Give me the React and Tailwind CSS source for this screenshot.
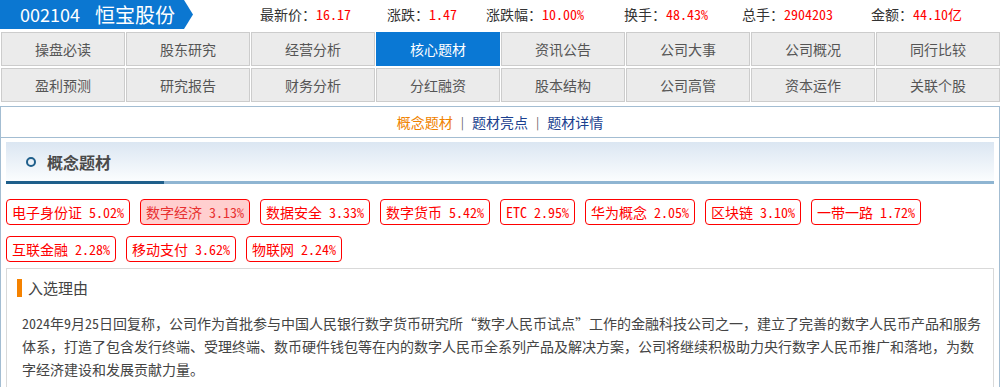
import React from "react";

const FONT = { fontFamily: '"Noto Sans CJK SC", "Noto Sans", sans-serif' };

const navRows = [
  ["操盘必读", "股东研究", "经营分析", "核心题材", "资讯公告", "公司大事", "公司概况", "同行比较"],
  ["盈利预测", "研究报告", "财务分析", "分红融资", "股本结构", "公司高管", "资本运作", "关联个股"],
];

const stats = [
  ["最新价：", "16.17", "w-[127px]"],
  ["涨跌：", "1.47", "w-[99px]"],
  ["涨跌幅：", "10.00%", "w-[138px]"],
  ["换手：", "48.43%", "w-[118px]"],
  ["总手：", "2904203", "w-[129px]"],
  ["金额：", "44.10亿", "w-[110px]"],
];

const tags = [
  ["电子身份证", "5.02%", false],
  ["数字经济", "3.13%", true],
  ["数据安全", "3.33%", false],
  ["数字货币", "5.42%", false],
  ["ETC", "2.95%", false],
  ["华为概念", "2.05%", false],
  ["区块链", "3.10%", false],
  ["一带一路", "1.72%", false],
  ["互联金融", "2.28%", false],
  ["移动支付", "3.62%", false],
  ["物联网", "2.24%", false],
];

function N({ children }) {
  return <span className="[font-feature-settings:'hwid']">{children}</span>;
}

export default function App() {
  return (
    <div className="w-[1001px] h-[387px] overflow-hidden bg-white" style={FONT}>
      {/* top header */}
      <div className="flex items-center h-[29px]">
        <div className="w-[193px] h-[29px] bg-[#0b77d1] [clip-path:polygon(0_0,184px_0,193px_50%,184px_100%,0_100%)] flex items-center pl-[20px] text-white">
          <span className="text-[18px] leading-[29px] w-[75px]">002104</span>
          <span className="text-[20px] leading-[29px]">恒宝股份</span>
        </div>
        <div className="flex items-center ml-[67px] text-[14px] leading-[29px]">
          {stats.map(([l, v, w]) => (
            <div key={l} className={`${w} whitespace-nowrap`}>
              <span className="text-[#333]">{l}</span>
              <span className="text-[#ff0000] [font-feature-settings:'hwid']">{v}</span>
            </div>
          ))}
        </div>
      </div>

      {/* nav grid */}
      <div className="mt-[3px] ml-px w-[999px] grid grid-cols-8 gap-x-px gap-y-[2px]">
        {navRows.flat().map((t) => {
          const active = t === "核心题材";
          return (
            <div
              key={t}
              className={
                active
                  ? "h-[34px] border border-[#0a78d4] bg-[#0a78d4] text-white flex items-center justify-center text-[14px]"
                  : "h-[34px] border border-[#cccccc] bg-[#ebebeb] text-[#555] flex items-center justify-center text-[14px]"
              }
            >
              {t}
            </div>
          );
        })}
      </div>

      {/* main panel */}
      <div className="mt-[4px] w-[1000px] border border-[#a3bdd2] h-[300px]">
        <div className="h-[31px] border-b border-[#a3bdd2] flex items-center justify-center text-[14px]">
          <span className="text-[#f08200]">概念题材</span>
          <span className="mx-[8px] text-[#666] text-[12px]">|</span>
          <span className="text-[#1a3f8f]">题材亮点</span>
          <span className="mx-[8px] text-[#666] text-[12px]">|</span>
          <span className="text-[#1a3f8f]">题材详情</span>
        </div>

        {/* section header */}
        <div className="mt-[4px] ml-[5px] w-[988px]">
          <div className="h-[39px] bg-gradient-to-b from-[#dbe6f2] to-[#fbfdfe] flex items-center pl-[20px]">
            <span className="w-[10px] h-[10px] rounded-full border-2 border-[#1f5f8b] box-border" />
            <span className="ml-[11px] text-[16px] font-bold text-[#4a4a4a]">概念题材</span>
          </div>
          <div className="flex h-[3px]">
            <div className="w-[158px] bg-[#1f5f8b]" />
            <div className="flex-1 bg-[#8fb5d2]" />
          </div>
        </div>

        {/* tags */}
        <div className="mt-[15px] ml-[5px] w-[988px] flex flex-wrap gap-x-[10px] gap-y-[11px] [font-feature-settings:'hwid']">
          {tags.map(([n, p, hl]) => (
            <div
              key={n}
              className={
                hl
                  ? "h-[26px] px-[5px] border border-[#ff0000] rounded-[4px] bg-[#ffcfcf] text-[#e83030] text-[14px] leading-[24px] whitespace-nowrap"
                  : "h-[26px] px-[5px] border border-[#ff0000] rounded-[4px] text-[#ff0000] text-[14px] leading-[24px] whitespace-nowrap"
              }
            >
              {n} {p}
            </div>
          ))}
        </div>

        {/* reason box */}
        <div className="mt-[6px] ml-[5px] w-[988px] border border-[#d9d9d9] h-[200px]">
          <div className="mt-[10px] pl-[10px] flex items-center h-[18px]">
            <span className="w-[5px] h-[18px] bg-[#f58200]" />
            <span className="ml-[6px] text-[15px] text-[#444] leading-[18px]">入选理由</span>
          </div>
          <p className="mt-[15px] pl-[15px] w-[976px] text-[14px] leading-[23px] text-[#444]">
            <N>2024</N>年<N>9</N>月<N>25</N>日回复称，公司作为首批参与中国人民银行数字货币研究所“数字人民币试点”工作的金融科技公司之一，建立了完善的数字人民币产品和服务体系，打造了包含发行终端、受理终端、数币硬件钱包等在内的数字人民币全系列产品及解决方案，公司将继续积极助力央行数字人民币推广和落地，为数字经济建设和发展贡献力量。
          </p>
        </div>
      </div>
    </div>
  );
}
